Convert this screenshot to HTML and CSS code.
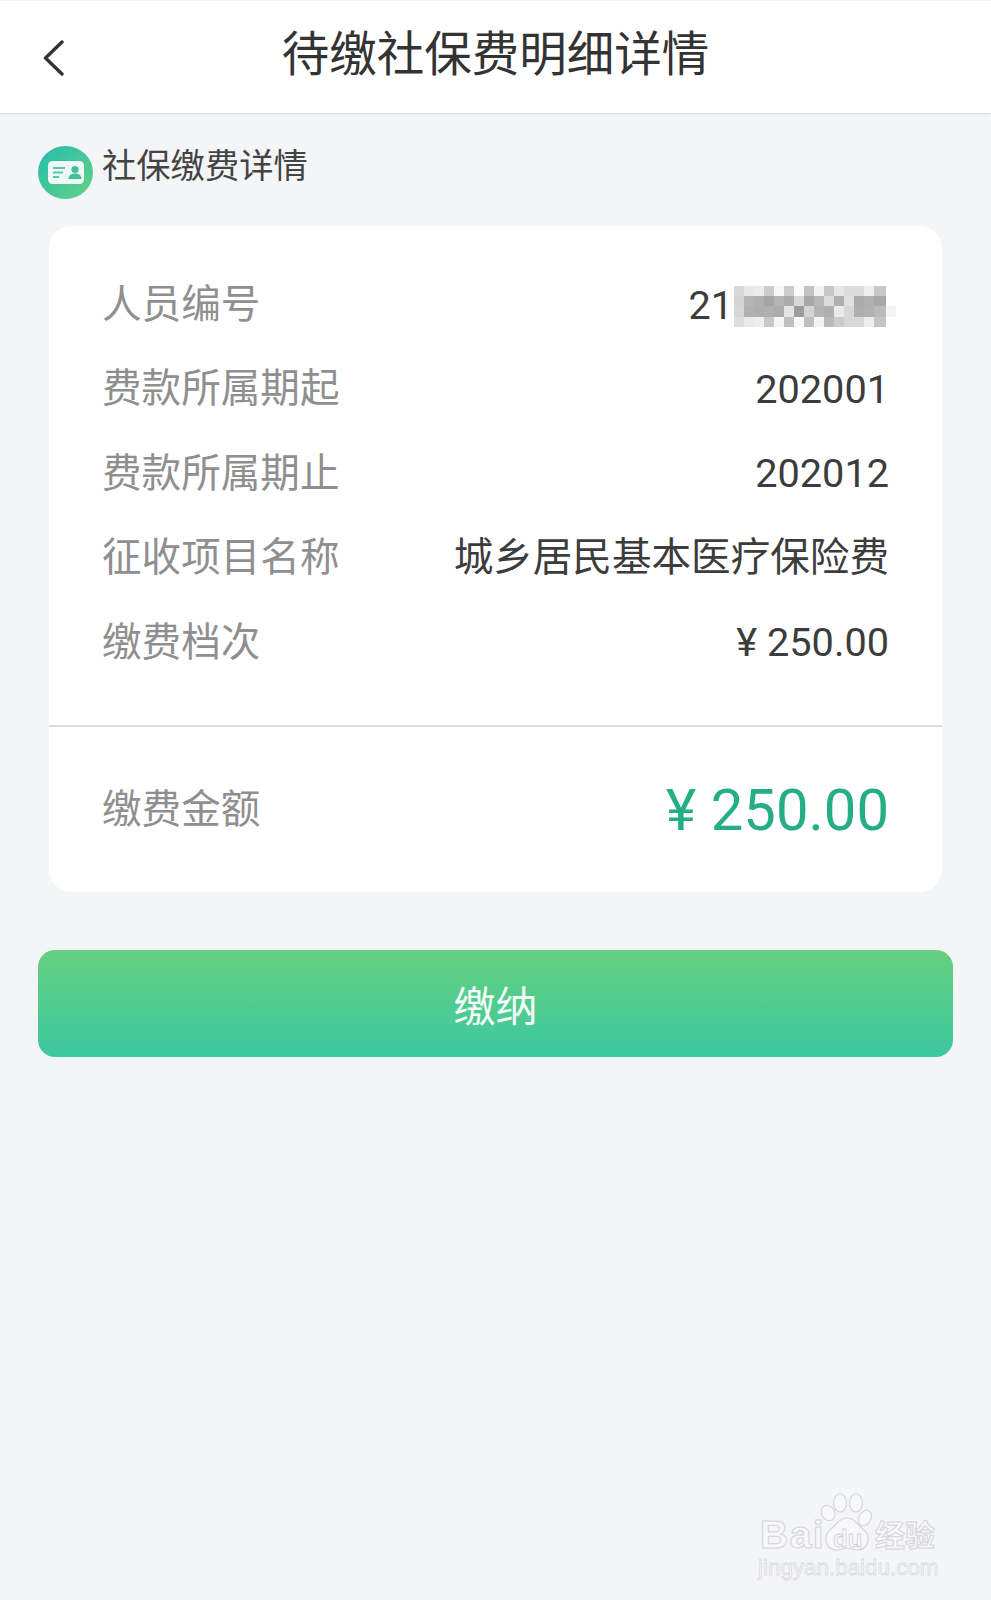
FILE: index.html
```html
<!DOCTYPE html>
<html lang="zh-CN">
<head>
<meta charset="utf-8">
<title>待缴社保费明细详情</title>
<link rel="stylesheet" href="styles.css">
</head>
<body>
<div class="page">
  <header class="topbar">
    <svg class="back" width="22" height="36" viewBox="0 0 22 36"><path d="M20 2 L3.5 18 L20 34" fill="none" stroke="#333" stroke-width="3.4" stroke-linecap="round" stroke-linejoin="round"/></svg>
    <h1 class="title">待缴社保费明细详情</h1>
  </header>
  <section class="section-head">
    <svg class="badge" width="55" height="53" viewBox="0 0 55 53">
      <defs><linearGradient id="bg" x1="0" y1="0" x2="1" y2="1"><stop offset="0" stop-color="#23bdae"/><stop offset="1" stop-color="#66d184"/></linearGradient></defs>
      <ellipse cx="27.5" cy="26.5" rx="27.5" ry="26.5" fill="url(#bg)"/>
      <rect x="10" y="15" width="36" height="23" rx="4.5" fill="#eef9f5"/>
      <path d="M15 22h12M15 26.500h10M15 31h6" stroke="#5ac8ae" stroke-width="1.800" fill="none"/>
      <circle cx="37" cy="23.500" r="3.600" fill="#43c0a0"/>
      <path d="M30.500 33c0-4 3-5.500 6.500-5.500s6.500 1.500 6.500 5.500z" fill="#43c0a0"/>
    </svg>
    <span class="section-title">社保缴费详情</span>
  </section>
  <main class="card">
    <div class="rows">
      <div class="row"><span class="label">人员编号</span>
        <span class="value id-value">21
          <svg class="mosaic" width="162" height="41" viewBox="0 0 162 41" shape-rendering="crispEdges">
            <rect x="0" y="0" width="10" height="10" fill="#d8d8d8"/><rect x="10" y="0" width="10" height="10" fill="#e8e8e8"/><rect x="20" y="0" width="10" height="10" fill="#ececec"/><rect x="30" y="0" width="10" height="10" fill="#cccccc"/><rect x="40" y="0" width="10" height="10" fill="#f8f8f8"/><rect x="50" y="0" width="10" height="10" fill="#cccccc"/><rect x="60" y="0" width="10" height="10" fill="#fafafa"/><rect x="70" y="0" width="10" height="10" fill="#c2c2c2"/><rect x="80" y="0" width="10" height="10" fill="#f2f2f2"/><rect x="90" y="0" width="10" height="10" fill="#c8c8c8"/><rect x="100" y="0" width="10" height="10" fill="#e6e6e6"/><rect x="110" y="0" width="10" height="10" fill="#dcdcdc"/><rect x="120" y="0" width="10" height="10" fill="#dcdcdc"/><rect x="130" y="0" width="10" height="10" fill="#eeeeee"/><rect x="140" y="0" width="12" height="10" fill="#c8c8c8"/>
            <rect x="0" y="10" width="10" height="10" fill="#d4d4d4"/><rect x="10" y="10" width="10" height="10" fill="#b4b4b4"/><rect x="20" y="10" width="10" height="10" fill="#b0b0b0"/><rect x="30" y="10" width="10" height="10" fill="#a4a4a4"/><rect x="40" y="10" width="10" height="10" fill="#b4b4b4"/><rect x="50" y="10" width="10" height="10" fill="#acacac"/><rect x="60" y="10" width="10" height="10" fill="#d8d8d8"/><rect x="70" y="10" width="10" height="10" fill="#a8a8a8"/><rect x="80" y="10" width="10" height="10" fill="#b8b8b8"/><rect x="90" y="10" width="10" height="10" fill="#dcdcdc"/><rect x="100" y="10" width="10" height="10" fill="#b0b0b0"/><rect x="110" y="10" width="10" height="10" fill="#e0e0e0"/><rect x="120" y="10" width="10" height="10" fill="#acacac"/><rect x="130" y="10" width="10" height="10" fill="#b0b0b0"/><rect x="140" y="10" width="12" height="10" fill="#a8a8a8"/>
            <rect x="0" y="20" width="10" height="11" fill="#d6d6d6"/><rect x="10" y="20" width="10" height="11" fill="#b0b0b0"/><rect x="20" y="20" width="10" height="11" fill="#aeaeae"/><rect x="30" y="20" width="10" height="11" fill="#b0b0b0"/><rect x="40" y="20" width="10" height="11" fill="#acacac"/><rect x="50" y="20" width="10" height="11" fill="#e4e4e4"/><rect x="60" y="20" width="10" height="11" fill="#9c9c9c"/><rect x="70" y="20" width="10" height="11" fill="#d4d4d4"/><rect x="80" y="20" width="10" height="11" fill="#b4b4b4"/><rect x="90" y="20" width="10" height="11" fill="#b0b0b0"/><rect x="100" y="20" width="10" height="11" fill="#eaeaea"/><rect x="110" y="20" width="10" height="11" fill="#d8d8d8"/><rect x="120" y="20" width="10" height="11" fill="#aeaeae"/><rect x="130" y="20" width="10" height="11" fill="#b2b2b2"/><rect x="140" y="20" width="12" height="11" fill="#bababa"/><rect x="152" y="20" width="10" height="11" fill="#f4f4f4"/>
            <rect x="0" y="31" width="10" height="10" fill="#dedede"/><rect x="10" y="31" width="10" height="10" fill="#eaeaea"/><rect x="20" y="31" width="10" height="10" fill="#eeeeee"/><rect x="30" y="31" width="10" height="10" fill="#c8c8c8"/><rect x="40" y="31" width="10" height="10" fill="#f6f6f6"/><rect x="50" y="31" width="10" height="10" fill="#c0c0c0"/><rect x="60" y="31" width="10" height="10" fill="#f8f8f8"/><rect x="70" y="31" width="10" height="10" fill="#c0c0c0"/><rect x="80" y="31" width="10" height="10" fill="#f4f4f4"/><rect x="90" y="31" width="10" height="10" fill="#bababa"/><rect x="100" y="31" width="10" height="10" fill="#cccccc"/><rect x="110" y="31" width="10" height="10" fill="#d8d8d8"/><rect x="120" y="31" width="10" height="10" fill="#d8d8d8"/><rect x="130" y="31" width="10" height="10" fill="#eeeeee"/><rect x="140" y="31" width="12" height="10" fill="#c4c4c4"/>
          </svg>
        </span>
      </div>
      <div class="row"><span class="label">费款所属期起</span><span class="value">202001</span></div>
      <div class="row"><span class="label">费款所属期止</span><span class="value">202012</span></div>
      <div class="row"><span class="label">征收项目名称</span><span class="value value-cn">城乡居民基本医疗保险费</span></div>
      <div class="row"><span class="label">缴费档次</span><span class="value">¥ 250.00</span></div>
    </div>
    <div class="total">
      <span class="label">缴费金额</span>
      <span class="amount">¥ 250.00</span>
    </div>
  </main>
  <button class="pay" type="button">缴纳</button>
  <div class="watermark">
    <div class="wm-top">
      <span class="wm-latin">Bai</span>
      <svg class="wm-paw" width="60" height="62" viewBox="0 0 60 62">
        <g fill="#f8f8fa" stroke="#d6d6da" stroke-width="1.200">
          <ellipse cx="10" cy="21" rx="6.500" ry="8" transform="rotate(-30 10 21)"/>
          <ellipse cx="22" cy="11" rx="6.500" ry="9"/>
          <ellipse cx="38" cy="11" rx="6.500" ry="9"/>
          <ellipse cx="47" cy="26" rx="6" ry="8" transform="rotate(30 47 26)"/>
          <path d="M29 26c7 0 9 5 17 12 7 6 5 20-7 20-4 0-7-2-10-2s-6 2-10 2c-12 0-14-14-7-20 8-7 10-12 17-12z"/>
        </g>
      </svg>
      <span class="wm-du">du</span>
      <span class="wm-cn">经验</span>
    </div>
    <div class="wm-url">jingyan.baidu.com</div>
  </div>
</div>
</body>
</html>
```
FILE: styles.css
```css
* { box-sizing: border-box; }
html, body { margin: 0; padding: 0; }
body {
  background: #f4f5f7;
  font-family: "Noto Sans CJK SC", Roboto, "Noto Sans", sans-serif;
}
.page {
  position: relative;
  width: 991px;
  height: 1600px;
  overflow: hidden;
  padding-top: 1px;
}
.topbar {
  position: relative;
  height: 112px;
  background: #fff;
  display: flex;
  align-items: center;
  justify-content: center;
  box-shadow: 0 1px 2px rgba(0, 0, 0, .12);
}
.back { position: absolute; left: 42px; top: 39px; }
.title {
  margin: 0 0 13px;
  font-size: 47.500px;
  font-weight: 400;
  line-height: 60px;
  color: #333;
}
.section-head {
  display: flex;
  align-items: flex-start;
  gap: 9px;
  height: 113px;
  padding: 33px 0 0 38px;
}
.section-title {
  margin-top: -5px;
  font-size: 34.300px;
  line-height: 44px;
  color: #444;
}
.card {
  margin: 0 49px;
  height: 666px;
  background: #fff;
  border-radius: 22px;
  display: flex;
  flex-direction: column;
}
.rows {
  height: 501px;
  padding: 36px 53px 0;
  border-bottom: 2px solid #dcdcdc;
}
.row {
  display: flex;
  align-items: center;
  justify-content: space-between;
  height: 84.500px;
}
.label {
  margin-bottom: 7px;
  font-size: 39.600px;
  line-height: 50px;
  color: #8f8f8f;
}
.value {
  margin-top: 2px;
  font-family: Roboto, "Noto Sans CJK SC", sans-serif;
  font-size: 39.700px;
  line-height: 50px;
  color: #3c3c3c;
}
.value-cn { font-size: 39.600px; margin-top: 1px; }
.id-value { display: flex; align-items: center; gap: 1px; margin-right: -7px; margin-top: 4px; }
.mosaic { display: block; }
.total {
  flex: 1;
  display: flex;
  align-items: center;
  justify-content: space-between;
  padding: 0 53px;
}
.amount {
  font-family: Roboto, "Noto Sans CJK SC", sans-serif;
  font-size: 58px;
  line-height: 70px;
  color: #25ae85;
}
.pay {
  display: block;
  width: 915px;
  height: 107px;
  margin: 58px 0 0 38px;
  padding-bottom: 2px;
  border: 0;
  border-radius: 17px;
  background: linear-gradient(180deg, #66cf7f 0%, #3cc8a0 100%);
  color: #f2fbf6;
  font-family: "Noto Sans CJK SC", sans-serif;
  font-size: 42px;
}
.watermark {
  position: absolute;
  left: 758px;
  top: 1492px;
  width: 180px;
  color: #f8f8fa;
  font-family: "Liberation Sans", sans-serif;
}
.wm-top { position: relative; height: 62px; }
.wm-latin {
  position: absolute;
  left: 2px;
  top: 22px;
  font-size: 39px;
  font-weight: 700;
  line-height: 42px;
  letter-spacing: 1.500px;
  -webkit-text-stroke: 1px #d4d4d8;
}
.wm-paw { position: absolute; left: 60px; top: 0; }
.wm-du {
  position: absolute;
  left: 75px;
  top: 34px;
  font-size: 24px;
  font-weight: 700;
  line-height: 26px;
  -webkit-text-stroke: .8px #d0d0d4;
}
.wm-cn {
  position: absolute;
  left: 117px;
  top: 23px;
  font-family: "Noto Sans CJK SC", sans-serif;
  font-size: 30px;
  font-weight: 700;
  line-height: 36px;
  -webkit-text-stroke: 1px #d4d4d8;
}
.wm-url {
  margin-top: 1px;
  font-size: 22.400px;
  line-height: 26px;
  white-space: nowrap;
  -webkit-text-stroke: .8px #dadade;
}
```
